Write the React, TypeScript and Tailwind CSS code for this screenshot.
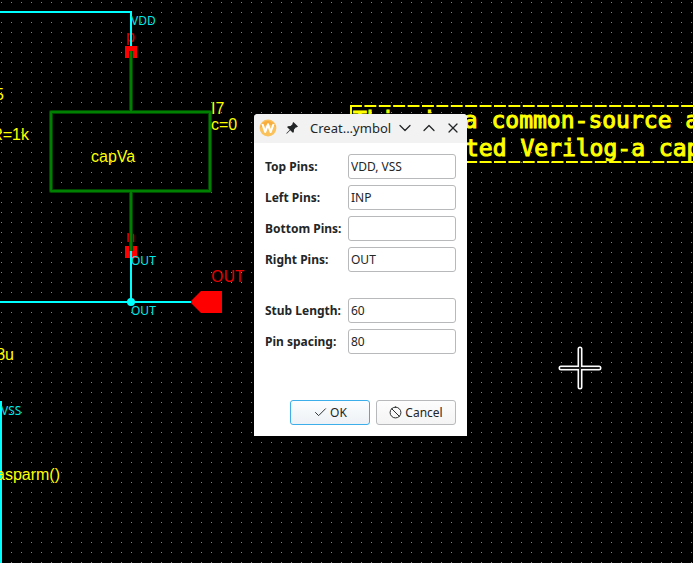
import { Ban, Check, ChevronDown, ChevronUp, X } from "lucide-react";

function Schematic() {
  return (
    <svg className="absolute inset-0 h-full w-full" aria-label="Schematic canvas">
      <defs>
        <pattern id="grid" width="10" height="10" patternUnits="userSpaceOnUse">
          <rect x="1" y="2" width="1" height="1" fill="#868686" />
        </pattern>
      </defs>
      <rect width="100%" height="100%" fill="url(#grid)" />

      {/* pins and their names */}
      <g fill="#ff0000">
        <rect x="125" y="46" width="12" height="12" />
        <rect x="125" y="246" width="12" height="12" />
        <path d="M190 302 201 291H222V313H201Z" />
      </g>
      <g className="font-['Liberation_Sans',sans-serif] text-[16px]" fill="#e00000">
        <text x="126" y="42">p</text>
        <text x="126" y="242">n</text>
      </g>
      <text className="font-['Noto_Sans',sans-serif] text-[16px]" x="211" y="282" fill="#e80000">OUT</text>

      {/* nets */}
      <g stroke="#00ffff" strokeWidth="2" fill="none">
        <path d="M0 12H131V46M131 251V302M0 302H191M1 401V563" />
        <circle cx="131" cy="302" r="3" fill="#00ffff" />
      </g>

      {/* capacitor symbol */}
      <g fill="none" strokeLinejoin="round">
        <path d="M131 51V112M131 191V251M51 112H210V191H51Z" stroke="#004600" strokeWidth="4" />
        <path d="M131 51V112M131 191V251M51 112H210V191H51Z" stroke="#008000" strokeWidth="2" />
      </g>

      <g className="font-['Noto_Sans',sans-serif] text-[12px]" fill="#00e8e8">
        <text x="131" y="25">VDD</text>
        <text x="131" y="265">OUT</text>
        <text x="131" y="315">OUT</text>
        <text x="1" y="415">VSS</text>
      </g>
      <g className="font-['Liberation_Sans',sans-serif] text-[16px]" fill="#ffff00">
        <text x="91" y="162">capVa</text>
        <text x="211" y="114">I7</text>
        <text x="211" y="130">c=0</text>
        <text x="4" y="100" textAnchor="end">R5</text>
        <text x="29" y="140" textAnchor="end">R=1k</text>
        <text x="14" y="360" textAnchor="end">8u</text>
        <text x="60" y="480" textAnchor="end">nasparm()</text>
      </g>

      {/* note */}
      <path d="M350 106H760M350 162H760M351 106V162" fill="none" stroke="#ffff00" strokeWidth="2" strokeDasharray="11.9 2.5" />
      <g className="font-['DejaVu_Sans_Mono',monospace] text-[23px]" fill="#ffff00" stroke="#ffff00" strokeWidth="1">
        <text x="353" y="128">This is a common-source amplifier</text>
        <text x="465" y="156">ted Verilog-a capacitor</text>
      </g>

      {/* cross pointer */}
      <g fill="none" strokeLinecap="round">
        <path d="M561 368H599M580 349V387" stroke="#ffffff" strokeWidth="5" />
        <path d="M561 368H599M580 349V387" stroke="#202020" strokeWidth="2" />
      </g>
    </svg>
  );
}

function Field({ id, label, value }: { id: string; label: string; value: string }) {
  return (
    <div className="flex h-[25px] items-center justify-between">
      <label htmlFor={id} className="font-bold">{label}</label>
      <input id={id} defaultValue={value} className="h-full w-[108px] rounded-[3px] border border-[#b8b9ba] bg-white px-[2px] outline-none" />
    </div>
  );
}

function WindowLogo() {
  return (
    <svg width="18" height="18" viewBox="0 0 18 18" aria-hidden="true">
      <circle cx="9" cy="9" r="8.4" fill="#fbc25c" />
      <path d="M1 9A8.2 8.2 0 0 1 17 8Q10 3 1 9Z" fill="#f8ad3c" />
      <path d="M3.4 5 6.2 13 9 5.3 11.6 13 14.6 5" fill="none" stroke="#fff" strokeWidth="2.1" strokeLinejoin="round" />
    </svg>
  );
}

function PinIcon() {
  return (
    <svg width="12" height="12" viewBox="0 0 12 12" aria-hidden="true">
      <path d="M7.4 0 12 4.6 10.6 5.6 10 5.3 8 7.4 7.8 10.2 6.8 10.8 4.2 8.2 .8 11.7.3 11.2 3.8 7.8 1.2 5.2 1.8 4.3 4.6 4 6.7 2 6.4 1.3Z" fill="#232627" />
    </svg>
  );
}

export default function App() {
  return (
    <main className="relative min-h-screen w-full overflow-hidden bg-black">
      <Schematic />
      <section
        role="dialog"
        aria-labelledby="dialog-title"
        className="absolute top-[114px] left-[254px] w-[213px] overflow-hidden rounded-t-[4px] bg-white font-['Noto_Sans',sans-serif] text-[12px] leading-4 text-[#232627]"
      >
        <header className="flex h-[29px] items-center bg-[#f2f2f2] pb-px pl-[5px]">
          <WindowLogo />
          <button type="button" aria-label="Keep above" className="ml-[9px]"><PinIcon /></button>
          <h1 id="dialog-title" className="ml-3 flex-1 text-[13px] leading-4">Creat...ymbol</h1>
          <div className="flex gap-2 pr-[6px]">
            <button type="button" aria-label="Minimize"><ChevronDown size={16} strokeWidth={1.5} className="scale-125" /></button>
            <button type="button" aria-label="Maximize"><ChevronUp size={16} strokeWidth={1.5} className="scale-125" /></button>
            <button type="button" aria-label="Close"><X size={16} strokeWidth={1.8} /></button>
          </div>
        </header>
        <form className="p-[11px]" onSubmit={(event) => event.preventDefault()}>
          <div className="flex flex-col gap-[6px]">
            <Field id="top" label="Top Pins:" value="VDD, VSS" />
            <Field id="left" label="Left Pins:" value="INP" />
            <Field id="bottom" label="Bottom Pins:" value="" />
            <Field id="right" label="Right Pins:" value="OUT" />
          </div>
          <div className="mt-[26px] flex flex-col gap-[6px]">
            <Field id="stub" label="Stub Length:" value="60" />
            <Field id="spacing" label="Pin spacing:" value="80" />
          </div>
          <div className="mt-[46px] flex justify-end gap-[6px]">
            <button type="submit" className="flex h-[25px] w-20 items-center justify-center gap-[2px] rounded-[3px] border border-[#3daee9] bg-linear-to-b from-[#fcfdfe] to-[#edf2f6]">
              <Check size={15} strokeWidth={1.5} />OK
            </button>
            <button type="button" className="flex h-[25px] w-20 items-center justify-center gap-[3px] rounded-[3px] border border-[#b8b9ba] bg-linear-to-b from-[#fdfdfd] to-[#f4f4f4]">
              <Ban size={13} strokeWidth={1.8} className="-scale-x-100 rotate-90" />Cancel
            </button>
          </div>
        </form>
      </section>
    </main>
  );
}
